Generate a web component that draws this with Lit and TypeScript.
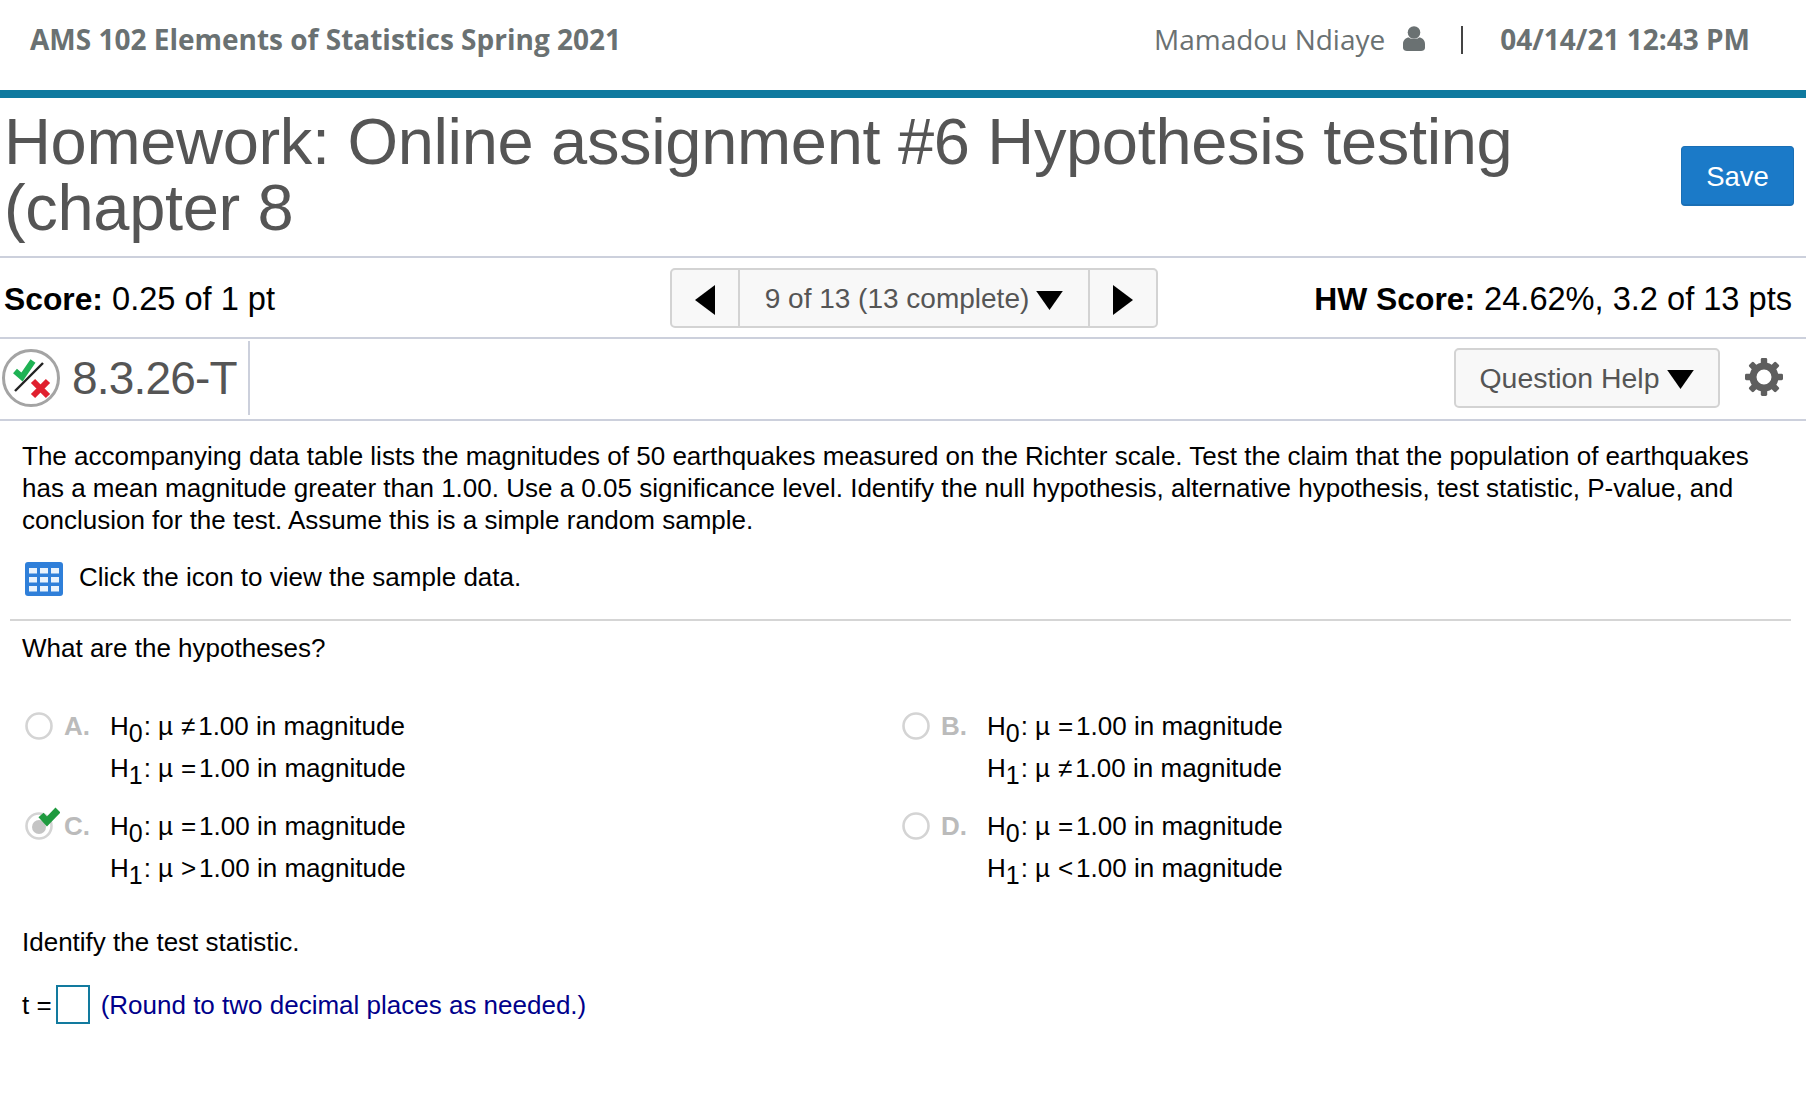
import { LitElement, html, css, svg } from "lit";
import { customElement } from "lit/decorators.js";

const caretDown = html`<svg class="caret" viewBox="0 0 28 20"><path d="M0 0H28L14 20Z" fill="#000"/></svg>`;

const gear = (() => {
  const cx = 20, cy = 20;
  const teeth = [];
  for (let i = 0; i < 8; i++) teeth.push(svg`<rect x="16.8" y="1" width="6.4" height="8" rx="1.4" transform="rotate(${i * 45} ${cx} ${cy})"/>`);
  return html`<svg class="gear" viewBox="0 0 40 40"><g fill="#5e5e5e">${teeth}</g><circle cx="20" cy="20" r="11" fill="none" stroke="#5e5e5e" stroke-width="7"/></svg>`;
})();

interface Opt { letter: string; h0: string; h1: string; selected?: boolean }
const options: Opt[] = [
  { letter: "A.", h0: "≠", h1: "=" },
  { letter: "B.", h0: "=", h1: "≠" },
  { letter: "C.", h0: "=", h1: ">", selected: true },
  { letter: "D.", h0: "=", h1: "<" },
];

@customElement("app-root")
export class AppRoot extends LitElement {
  static styles = css`
    :host { display: block; width: 1806px; height: 1102px; background: #fff; font-family: "Liberation Sans", Arial, sans-serif; color: #000; overflow: hidden; }
    .top { height: 90px; display: flex; align-items: center; justify-content: space-between; padding: 0 56px 12px 30px; font-family: "Open Sans", sans-serif; font-size: 28px; color: #6a7172; box-sizing: border-box; }
    .top b { font-weight: 700; }
    .top-right { display: flex; align-items: center; }
    .user { font-weight: 400; }
    .person { width: 22px; height: 26px; margin-left: 18px; }
    .sep { width: 2px; height: 28px; background: #444; margin: 2px 37px 0 36px; }
    .bar { height: 8px; background: #0f7a9f; }
    .title-row { height: 158px; display: flex; align-items: flex-start; border-bottom: 2px solid #ccd0dc; }
    h1 { margin: 11px 0 0 4px; flex: 1; font-size: 65px; line-height: 66px; font-weight: 400; color: #555; letter-spacing: -0.33px; }
    .save { width: 113px; height: 60px; margin: 48px 12px 0 0; box-sizing: border-box; background: #1b7ac8; border: 1px solid #1a6fb5; border-bottom-width: 2px; border-radius: 4px; color: #fff; font-size: 27.5px; padding-top: 2px; display: flex; align-items: center; justify-content: center; }
    .score-row { height: 79px; display: grid; grid-template-columns: 666px auto 1fr; align-items: center; border-bottom: 2px solid #ccd0dc; font-size: 32.6px; padding: 0 14px 0 4px; }
    .score-row b { font-size: 31.8px; }
    .score-text { padding-top: 3px; }
    .right { text-align: right; padding-top: 3px; }
    .nav { display: flex; height: 60px; box-sizing: border-box; border: 2px solid #d3d3d3; border-radius: 5px; background: #f8f8f8; color: #555; font-size: 28px; }
    .nav > div { display: flex; align-items: center; justify-content: center; padding-top: 2px; box-sizing: border-box; }
    .nav .arrow { width: 66px; padding-top: 4px; }
    .nav .arrow svg { width: 20px; height: 30px; }
    .nav .mid { width: 352px; border-left: 2px solid #d3d3d3; border-right: 2px solid #d3d3d3; gap: 7px; }
    .caret { width: 27px; height: 19px; margin-top: 3px; }
    .q-row { height: 80px; display: flex; align-items: center; border-bottom: 2px solid #ccd0dc; }
    .qicon { width: 60px; height: 60px; margin: -3px 0 0 1px; }
    .qnum { font-size: 46px; color: #555; margin-left: 11px; letter-spacing: -0.8px; height: 74px; line-height: 74px; padding-right: 11px; border-right: 2px solid #ccd0dc; margin-top: -2px; }
    .spacer { flex: 1; }
    .help { width: 266px; height: 60px; margin-top: -2px; box-sizing: border-box; border: 2px solid #d3d3d3; border-radius: 5px; background: #f8f8f8; color: #555; font-size: 28.4px; display: flex; align-items: center; justify-content: center; gap: 8px; }
    .gear { width: 40px; height: 40px; margin: -4px 22px 0 24px; }
    .body { padding: 0 15px 0 10px; font-size: 26px; line-height: 32px; }
    .para { padding: 19px 0 0 12px; }
    .data { display: flex; align-items: center; padding: 19px 0 0 15px; height: 44px; }
    .data svg { width: 38px; height: 34px; margin-right: 16px; margin-top: 4px; }
    .rule { height: 2px; background: #d5d5d5; margin-top: 20px; }
    .what { padding: 11px 0 0 12px; }
    .opts { display: grid; grid-template-columns: 877px 1fr; margin-top: 42px; row-gap: 18px; padding-left: 15px; }
    .opt { display: flex; align-items: flex-start; height: 82px; }
    .mark { position: relative; width: 28px; height: 28px; margin-top: 6px; flex: none; }
    .radio { width: 28px; height: 28px; }
    .tick { position: absolute; left: 13px; top: -5px; width: 22px; height: 20px; }
    .letter { width: 58px; padding-left: 11px; flex: none; font-weight: 700; color: #bbb; box-sizing: border-box; line-height: 40px; }
    .hyp { line-height: 41.5px; margin-left: -1px; }
    .hyp sub { font-size: 25px; line-height: 0; vertical-align: -7px; margin-right: 1px; }
    .hyp .op { margin: 0 3px 0 8px; }
    .hyp .mu { margin-left: 7px; }
    .ident { padding: 38px 0 0 12px; }
    .ans { display: flex; align-items: center; padding: 27px 0 0 12px; }
    .box { width: 34px; height: 39px; box-sizing: border-box; border: 2px solid #127a9e; margin: 0 11px 0 4px; }
    .note { color: #00008b; }
  `;

  private hyp(n: string, op: string) {
    return html`<div>H<sub>${n}</sub>:<span class="mu">µ</span><span class="op">${op}</span>1.00 in magnitude</div>`;
  }

  render() {
    return html`
      <div class="top">
        <b>AMS 102 Elements of Statistics Spring 2021</b>
        <div class="top-right">
          <span class="user">Mamadou Ndiaye</span>
          <svg class="person" viewBox="0 0 22 26"><circle cx="11" cy="6.5" r="6.3" fill="#6a7172"/><path d="M0 22V18C0 14 3 11.5 6 11.5C8 13.5 14 13.5 16 11.5C19 11.5 22 14 22 18V22C22 24 20 25 18 25H4C2 25 0 24 0 22Z" fill="#6a7172"/></svg>
          <span class="sep"></span>
          <b>04/14/21 12:43 PM</b>
        </div>
      </div>
      <div class="bar"></div>
      <div class="title-row">
        <h1>Homework: Online assignment #6 Hypothesis testing (chapter 8</h1>
        <div class="save">Save</div>
      </div>
      <div class="score-row">
        <div class="score-text"><b>Score:</b> 0.25 of 1 pt</div>
        <div class="nav">
          <div class="arrow"><svg viewBox="0 0 20 30"><path d="M20 0V30L0 15Z" fill="#000"/></svg></div>
          <div class="mid">9 of 13 (13 complete) ${caretDown}</div>
          <div class="arrow"><svg viewBox="0 0 20 30"><path d="M0 0V30L20 15Z" fill="#000"/></svg></div>
        </div>
        <div class="right"><b>HW Score:</b> 24.62%, 3.2 of 13 pts</div>
      </div>
      <div class="q-row">
        <svg class="qicon" viewBox="0 0 60 60">
          <circle cx="30" cy="30" r="27.5" fill="#fff" stroke="#a4a4a4" stroke-width="3"/>
          <path d="M14 23L21 29L32 13" fill="none" stroke="#1fb254" stroke-width="6"/>
          <path d="M14 43L42 15" stroke="#222" stroke-width="2.4"/>
          <path d="M32 33L47 48M47 33L32 48" stroke="#e0202f" stroke-width="6"/>
        </svg>
        <div class="qnum">8.3.26-T</div>
        <div class="spacer"></div>
        <div class="help">Question Help ${caretDown}</div>
        ${gear}
      </div>
      <div class="body">
        <div class="para">The accompanying data table lists the magnitudes of 50 earthquakes measured on the Richter scale. Test the claim that the population of earthquakes has a mean magnitude greater than 1.00. Use a 0.05 significance level. Identify the null hypothesis, alternative hypothesis, test statistic, P-value, and conclusion for the test. Assume this is a simple random sample.</div>
        <div class="data">
          <svg viewBox="0 0 38 34"><rect width="38" height="34" rx="3" fill="#2f7fd9"/>
            <g fill="#eaf3fc">
              ${[4, 15, 26].map((x) => [6, 15, 24].map((y) => svg`<rect x="${x}" y="${y}" width="8" height="5.5"/>`))}
            </g>
          </svg>
          <span>Click the icon to view the sample data.</span>
        </div>
        <div class="rule"></div>
        <div class="what">What are the hypotheses?</div>
        <div class="opts">
          ${options.map((o) => html`
            <div class="opt">
              <div class="mark">
                <svg class="radio" viewBox="0 0 28 28">
                  <circle cx="14" cy="14" r="12.5" fill="#fff" stroke="#d4d4d4" stroke-width="2.6"/>
                  ${o.selected ? svg`<circle cx="14" cy="15" r="7" fill="#c4c4c4"/>` : ""}
                </svg>
                ${o.selected ? html`<svg class="tick" viewBox="0 0 22 20"><path d="M3 8L9 14.5L20 3" fill="none" stroke="#1f9a3f" stroke-width="7"/></svg>` : ""}
              </div>
              <div class="letter">${o.letter}</div>
              <div class="hyp">${this.hyp("0", o.h0)}${this.hyp("1", o.h1)}</div>
            </div>`)}
        </div>
        <div class="ident">Identify the test statistic.</div>
        <div class="ans">t =<span class="box"></span><span class="note">(Round to two decimal places as needed.)</span></div>
      </div>
    `;
  }
}
